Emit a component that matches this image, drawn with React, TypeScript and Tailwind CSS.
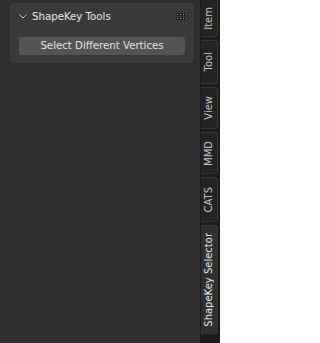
import React from 'react';

const tabs = [
    { label: 'Item', h: 'h-[37px]', first: true },
    { label: 'Tool', h: 'h-[44px]' },
    { label: 'View', h: 'h-[42px]' },
    { label: 'MMD', h: 'h-[42px]' },
    { label: 'CATS', h: 'h-[45px]' },
    { label: 'ShapeKey Selector', h: 'h-[109px]', active: true },
];

const Grip: React.FC = () => (
    <div className="grid grid-cols-4 gap-x-[2px] gap-y-[3px]">
        {Array.from({ length: 8 }).map((_, i) => (
            <span key={i} className="w-[1px] h-[1px] bg-[#9a9a9a] outline outline-1 outline-[#222]" />
        ))}
    </div>
);

const App: React.FC = () => {
    return (
        <div className="w-[220px] h-[343px] flex overflow-hidden font-['DejaVu_Sans',sans-serif] text-[10px]">
            <div className="flex-1 bg-[#2e2e2e] pt-[3px] pl-[10px]">
                <div className="w-[184px] h-[60px] rounded-[4px] bg-[#3a3a3a] px-[9px]">
                    <div className="h-[27px] flex items-center">
                        <svg width="8" height="5" viewBox="0 0 8 5" className="mt-[-1px]">
                            <path d="M0.5 0.5 L4 4 L7.5 0.5" fill="none" stroke="#c8c8c8" strokeWidth="1" />
                        </svg>
                        <span className="ml-[5px] text-[#e6e6e6] text-[10.2px]">ShapeKey Tools</span>
                        <div className="ml-auto mr-[-2px] mt-[-1px]">
                            <Grip />
                        </div>
                    </div>
                    <div className="mt-[7px] h-[18px] rounded-[3px] bg-[#545454] flex items-center justify-center text-[#e2e2e2] text-[10.2px]">
                        Select Different Vertices
                    </div>
                </div>
            </div>
            <div className="w-[20px] bg-[#1c1c1c] flex flex-col gap-[3px] pr-[2px] pl-[1px]">
                {tabs.map(t => (
                    <div
                        key={t.label}
                        className={`${t.h} shrink-0 flex items-center justify-center border border-l-0 ${t.first ? 'border-t-0 rounded-br-[4px]' : 'rounded-r-[4px]'} ${t.active ? 'bg-[#303030] border-[#3a3a3a] text-[#e8e8e8]' : 'bg-[#232323] border-[#363636] text-[#c4c4c4]'}`}
                    >
                        <span className="[writing-mode:vertical-rl] rotate-180 leading-none whitespace-nowrap">{t.label}</span>
                    </div>
                ))}
            </div>
        </div>
    );
};

export default App;
